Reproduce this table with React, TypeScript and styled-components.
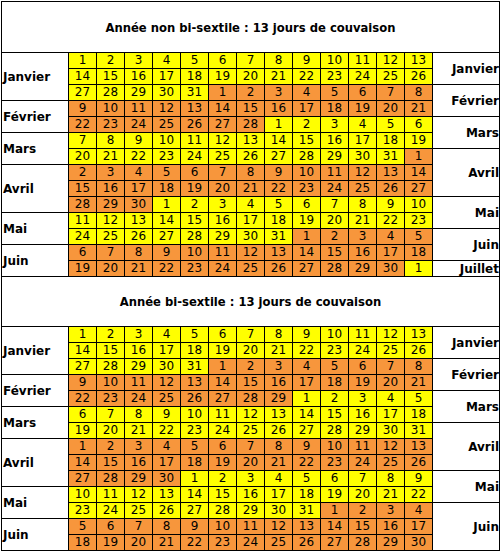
import * as React from 'react';
import styled, { createGlobalStyle } from 'styled-components';

const MONTHS = [
  'Janvier',
  'Février',
  'Mars',
  'Avril',
  'Mai',
  'Juin',
  'Juillet',
];

type Span = { month: number; rows: number };

type Section = {
  title: string;
  leap: boolean;
  left: Span[];
  right: Span[];
};

const SECTIONS: Section[] = [
  {
    title: 'Année non bi-sextile : 13 jours de couvaison',
    leap: false,
    left: [
      { month: 0, rows: 3 },
      { month: 1, rows: 2 },
      { month: 2, rows: 2 },
      { month: 3, rows: 3 },
      { month: 4, rows: 2 },
      { month: 5, rows: 2 },
    ],
    right: [
      { month: 0, rows: 2 },
      { month: 1, rows: 2 },
      { month: 2, rows: 2 },
      { month: 3, rows: 3 },
      { month: 4, rows: 2 },
      { month: 5, rows: 2 },
      { month: 6, rows: 1 },
    ],
  },
  {
    title: 'Année bi-sextile : 13 jours de couvaison',
    leap: true,
    left: [
      { month: 0, rows: 3 },
      { month: 1, rows: 2 },
      { month: 2, rows: 2 },
      { month: 3, rows: 3 },
      { month: 4, rows: 2 },
      { month: 5, rows: 2 },
    ],
    right: [
      { month: 0, rows: 2 },
      { month: 1, rows: 2 },
      { month: 2, rows: 2 },
      { month: 3, rows: 3 },
      { month: 4, rows: 2 },
      { month: 5, rows: 3 },
    ],
  },
];

const COLS = 13;
const ROWS = 14;

// every day from 1 January, split in rows of 13
const buildDays = (leap: boolean) => {
  const lengths = [31, leap ? 29 : 28, 31, 30, 31, 30, 31];
  const days: { day: number; month: number }[] = [];
  let month = 0;
  let day = 1;
  while (days.length < COLS * ROWS) {
    days.push({ day, month });
    day += 1;
    if (day > lengths[month]) {
      day = 1;
      month += 1;
    }
  }
  return days;
};

const GlobalStyle = createGlobalStyle`
  html, body {
    margin: 0;
    padding: 0;
    background: #fff;
  }
  body {
    font-family: "DejaVu Sans", Verdana, sans-serif;
    color: #000;
  }
`;

const Sheet = styled.div`
  display: grid;
  grid-template-columns: 66px repeat(13, 27px) 66px;
  grid-template-rows: 50px repeat(14, 15px) 49px repeat(14, 15px);
  gap: 1px;
  padding: 1px;
  margin: 1px 0 0 1px;
  width: max-content;
  background: #000;
`;

const Title = styled.div<{ $row: number }>`
  grid-column: 1 / -1;
  grid-row: ${(p) => p.$row};
  display: flex;
  align-items: center;
  justify-content: center;
  padding-top: 1px;
  background: #fff;
  font-size: 11.6px;
  font-weight: bold;
`;

const MonthLabel = styled.div<{
  $row: number;
  $span: number;
  $side: 'left' | 'right';
}>`
  grid-column: ${(p) => (p.$side === 'left' ? 1 : COLS + 2)};
  grid-row: ${(p) => p.$row} / span ${(p) => p.$span};
  display: flex;
  align-items: center;
  justify-content: ${(p) => (p.$side === 'left' ? 'flex-start' : 'flex-end')};
  padding: ${(p) => (p.$side === 'left' ? '0 0 0 1px' : '0')};
  background: #fff;
  font-size: 12px;
  font-weight: bold;
  white-space: nowrap;
`;

const Day = styled.div<{ $row: number; $col: number; $odd: boolean }>`
  grid-column: ${(p) => p.$col};
  grid-row: ${(p) => p.$row};
  background: ${(p) => (p.$odd ? '#f7963c' : '#ffff00')};
  font-size: 12px;
  line-height: 15px;
  text-align: center;
`;

const CalendarSection = ({
  section,
  startRow,
}: {
  section: Section;
  startRow: number;
}) => {
  const days = buildDays(section.leap);
  const first = startRow + 1;

  const labels = (spans: Span[], side: 'left' | 'right') => {
    let row = first;
    return spans.map((s) => {
      const el = (
        <MonthLabel
          key={side + s.month}
          $row={row}
          $span={s.rows}
          $side={side}
        >
          {MONTHS[s.month]}
        </MonthLabel>
      );
      row += s.rows;
      return el;
    });
  };

  return (
    <>
      <Title $row={startRow}>{section.title}</Title>
      {labels(section.left, 'left')}
      {days.map((d, i) => (
        <Day
          key={i}
          $row={first + Math.floor(i / COLS)}
          $col={(i % COLS) + 2}
          $odd={d.month % 2 === 1}
        >
          {d.day}
        </Day>
      ))}
      {labels(section.right, 'right')}
    </>
  );
};

export default function App() {
  return (
    <>
      <GlobalStyle />
      <Sheet>
        {SECTIONS.map((s, i) => (
          <CalendarSection
            key={s.title}
            section={s}
            startRow={1 + i * (ROWS + 1)}
          />
        ))}
      </Sheet>
    </>
  );
}
